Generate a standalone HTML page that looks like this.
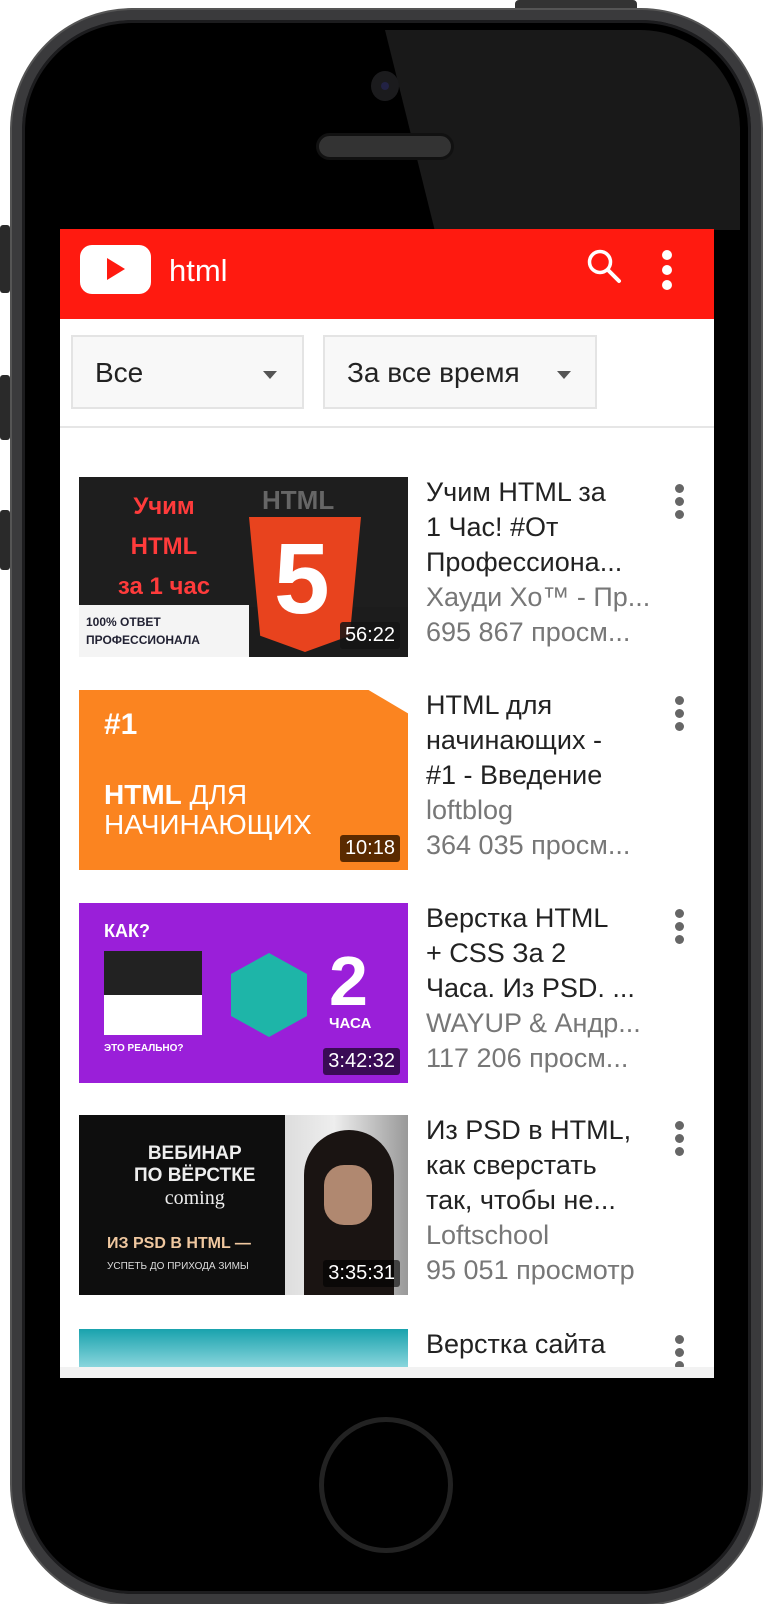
<!DOCTYPE html>
<html><head><meta charset="utf-8"><style>
*{margin:0;padding:0;box-sizing:border-box}
body{width:763px;height:1602px;background:#fff;position:relative;overflow:hidden;font-family:"Liberation Sans",sans-serif}
.abs{position:absolute}
.body{left:12px;top:10px;width:749px;height:1594px;border-radius:120px;background:#000;border:10px solid #3a3a3c;box-shadow:inset 0 0 0 3px #1c1c1e, 0 0 0 2px #555}
.screen{left:60px;top:229px;width:654px;height:1149px;background:#fff;overflow:hidden}
.hdr{left:0;top:0;width:654px;height:90px;background:#ff1a10}
.box{background:#f8f8f8;border:2px solid #e4e4e4;height:74px;top:106px;font-size:28px;color:#222;padding:20px 0 0 22px}
.tri{position:absolute;top:34px;width:0;height:0;border-left:7px solid transparent;border-right:7px solid transparent;border-top:8px solid #555}
.thumb{left:19px;width:329px;height:180px;overflow:hidden}
.t{left:366px;font-size:27px;line-height:35px;color:#222;white-space:nowrap;width:240px;overflow:hidden}
.t .g{color:#777}
.dots{left:615px;width:9px}
.dots i{display:block;width:9px;height:9px;border-radius:50%;background:#666;margin-bottom:4px}
.dur{position:absolute;right:8px;bottom:8px;background:rgba(20,20,20,.85);color:#fff;font-size:20px;padding:2px 5px;border-radius:3px}
</style></head><body>
<div class="abs" style="left:0;top:225px;width:10px;height:68px;background:#2a2a2a;border-radius:3px"></div>
<div class="abs" style="left:0;top:375px;width:10px;height:65px;background:#2a2a2a;border-radius:3px"></div>
<div class="abs" style="left:0;top:510px;width:10px;height:60px;background:#2a2a2a;border-radius:3px"></div>
<div class="abs" style="left:515px;top:0;width:122px;height:14px;background:#333;border-radius:4px 4px 0 0"></div>
<div class="abs body"></div>
<div class="abs" style="left:30px;top:30px;width:710px;height:200px;background:#191919;clip-path:polygon(50% 0,100% 0,100% 100%,57% 100%);border-radius:0 100px 0 0"></div>
<div class="abs" style="left:371px;top:71px;width:28px;height:30px;border-radius:50%;background:#1b1b1d"></div>
<div class="abs" style="left:381px;top:82px;width:8px;height:8px;border-radius:50%;background:#224"></div>
<div class="abs" style="left:316px;top:133px;width:138px;height:27px;border-radius:14px;background:#333;border:3px solid #111"></div>
<div class="abs" style="left:319px;top:1417px;width:134px;height:136px;border-radius:50%;border:5px solid #222"></div>

<div class="abs screen">
 <div class="abs hdr">
  <div class="abs" style="left:20px;top:16px;width:71px;height:49px;background:#fff;border-radius:12px"></div>
  <div class="abs" style="left:47px;top:29px;width:0;height:0;border-top:11px solid transparent;border-bottom:11px solid transparent;border-left:18px solid #ff1a10"></div>
  <div class="abs" style="left:109px;top:24px;color:#fff;font-size:31px">html</div>
  <svg class="abs" style="left:525px;top:18px" width="40" height="40" viewBox="0 0 40 40"><circle cx="15" cy="15" r="10.5" fill="none" stroke="#fff" stroke-width="3.5"/><path d="M23 23 L34 34" stroke="#fff" stroke-width="4" stroke-linecap="round"/></svg>
  <div class="abs dots" style="left:602px;top:21px"><i style="background:#fff;margin-bottom:5px;width:10px;height:10px"></i><i style="background:#fff;margin-bottom:5px;width:10px;height:10px"></i><i style="background:#fff;width:10px;height:10px"></i></div>
 </div>
 <div class="abs box" style="left:11px;width:233px">Все<span class="tri" style="left:190px"></span></div>
 <div class="abs box" style="left:263px;width:274px">За все время<span class="tri" style="left:232px"></span></div>
 <div class="abs" style="left:0;top:197px;width:654px;height:2px;background:#e6e6e6"></div>

 <div class="abs thumb" style="top:248px;background:#1c1c1c">
  <div class="abs" style="left:0;top:0;width:329px;height:130px;background:#1e1e1e"></div>
  <div class="abs" style="left:0;top:128px;width:170px;height:52px;background:#f4f4f4"></div>
  <div class="abs" style="left:20px;top:10px;color:#ff3b3b;font-weight:bold;font-size:24px;line-height:40px;text-align:center;width:130px;white-space:nowrap">Учим<br>HTML<br>за 1 час</div>
  <div class="abs" style="left:7px;top:136px;color:#223;font-weight:bold;font-size:12px;line-height:18px">100% ОТВЕТ<br>ПРОФЕССИОНАЛА</div>
  <div class="abs" style="left:170px;top:40px;width:112px;height:135px;background:#e8431e;clip-path:polygon(0 0,100% 0,90% 88%,50% 100%,10% 88%)"></div>
  <div class="abs" style="left:195px;top:52px;color:#fff;font-weight:bold;font-size:100px;line-height:100px">5</div>
  <div class="abs" style="left:183px;top:8px;color:#666;font-weight:bold;font-size:26px">HTML</div>
  <span class="dur">56:22</span>
 </div>
 <div class="abs t" style="top:246px">Учим HTML за<br>1 Час! #От<br>Профессиона...<br><span class="g">Хауди Хо™ - Пр...<br>695 867 просм...</span></div>
 <div class="abs dots" style="top:255px"><i></i><i></i><i></i></div>

 <div class="abs thumb" style="top:461px;background:#fb8420;clip-path:polygon(0 0,88% 0,100% 13%,100% 100%,0 100%)">
  <div class="abs" style="left:25px;top:18px;color:#fff;font-weight:bold;font-size:30px">#1</div>
  <div class="abs" style="left:25px;top:90px;color:#fff;font-size:28px;line-height:30px"><b>HTML</b> ДЛЯ<br>НАЧИНАЮЩИХ</div>
  <span class="dur" style="background:#5a2a00">10:18</span>
 </div>
 <div class="abs t" style="top:459px">HTML для<br>начинающих -<br>#1 - Введение<br><span class="g">loftblog<br>364 035 просм...</span></div>
 <div class="abs dots" style="top:467px"><i></i><i></i><i></i></div>

 <div class="abs thumb" style="top:674px;background:#9a1fd9">
  <div class="abs" style="left:25px;top:18px;color:#fff;font-weight:bold;font-size:18px">КАК?</div>
  <div class="abs" style="left:25px;top:48px;width:98px;height:84px;background:#222;border-bottom:40px solid #fff"></div>
  <div class="abs" style="left:152px;top:50px;width:76px;height:84px;background:#1eb5a8;clip-path:polygon(50% 0,100% 25%,100% 75%,50% 100%,0 75%,0 25%)"></div>
  <div class="abs" style="left:250px;top:38px;color:#fff;font-weight:bold;font-size:70px">2</div>
  <div class="abs" style="left:250px;top:112px;color:#fff;font-weight:bold;font-size:15px">ЧАСА</div>
  <div class="abs" style="left:25px;top:140px;color:#fff;font-weight:bold;font-size:10px">ЭТО РЕАЛЬНО?</div>
  <span class="dur" style="background:#3a0b55">3:42:32</span>
 </div>
 <div class="abs t" style="top:672px">Верстка HTML<br>+ CSS За 2<br>Часа. Из PSD. ...<br><span class="g">WAYUP &amp; Андр...<br>117 206 просм...</span></div>
 <div class="abs dots" style="top:680px"><i></i><i></i><i></i></div>

 <div class="abs thumb" style="top:886px;background:#0e0e0e">
  <div class="abs" style="left:206px;top:0;width:123px;height:180px;background:linear-gradient(90deg,#ddd,#eee 40%,#999)"></div>
  <div class="abs" style="left:225px;top:15px;width:90px;height:165px;background:#1a1412;border-radius:45px 45px 0 0"></div>
  <div class="abs" style="left:245px;top:50px;width:48px;height:60px;background:#b08870;border-radius:20px"></div>
  <div class="abs" style="left:55px;top:28px;color:#eee;font-weight:bold;font-size:19px;line-height:22px;text-align:center">ВЕБИНАР<br>ПО ВЁРСТКЕ<br><span style="font-family:'Liberation Serif';font-weight:normal;font-size:20px">coming</span></div>
  <div class="abs" style="left:28px;top:120px;color:#f0c8a0;font-weight:bold;font-size:16px">ИЗ PSD В HTML —</div>
  <div class="abs" style="left:28px;top:146px;color:#ddd;font-size:10px">УСПЕТЬ ДО ПРИХОДА ЗИМЫ</div>
  <span class="dur" style="background:rgba(0,0,0,.6)">3:35:31</span>
 </div>
 <div class="abs t" style="top:884px">Из PSD в HTML,<br>как сверстать<br>так, чтобы не...<br><span class="g">Loftschool<br>95 051 просмотр</span></div>
 <div class="abs dots" style="top:892px"><i></i><i></i><i></i></div>

 <div class="abs thumb" style="top:1100px;height:40px;background:linear-gradient(180deg,#19a2ad,#8fd8df)"></div>
 <div class="abs t" style="top:1098px">Верстка сайта</div>
 <div class="abs dots" style="top:1106px"><i></i><i></i><i></i></div>
 <div class="abs" style="left:0;top:1138px;width:654px;height:11px;background:#f2f2f2"></div>
</div>
</body></html>
